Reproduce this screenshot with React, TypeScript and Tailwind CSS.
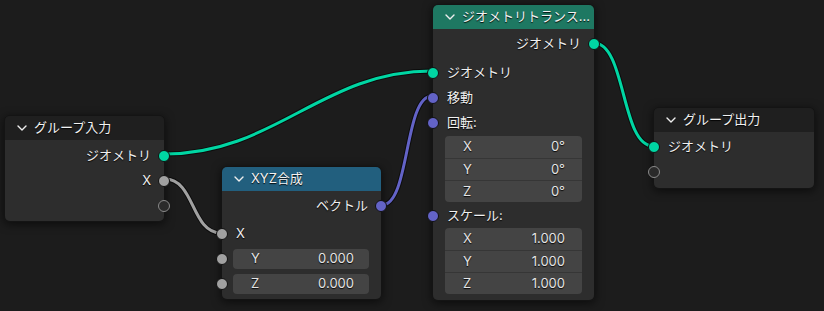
import type { ReactNode } from 'react';

const TEAL = '#00d6a3';
const PURPLE = '#6363c7';
const GREY = '#a1a1a1';

type SocketKind = 'teal' | 'purple' | 'grey' | 'empty';

const Socket = ({ kind, side }: { kind: SocketKind; side: 'left' | 'right' }) => {
  const pos = side === 'left' ? 'left-0 -translate-x-1/2' : 'right-0 translate-x-1/2';
  if (kind === 'empty') {
    return (
      <span
        className={`absolute top-1/2 -translate-y-1/2 ${pos} w-[12px] h-[12px] rounded-full bg-[#2a2a2a] border-[1.5px] border-[#8a8a8a] z-10`}
      />
    );
  }
  const bg = kind === 'teal' ? 'bg-[#00d6a3]' : kind === 'purple' ? 'bg-[#6363c7]' : 'bg-[#a1a1a1]';
  return (
    <span
      className={`absolute top-1/2 -translate-y-1/2 ${pos} w-[12px] h-[12px] rounded-full ${bg} border border-[#111] z-10`}
    />
  );
};

const Chevron = () => (
  <svg width="12" height="12" viewBox="0 0 12 12" className="shrink-0">
    <polyline points="2,4 6,8 10,4" fill="none" stroke="#eeeeee" strokeWidth="1.4" strokeLinecap="round" strokeLinejoin="round" />
  </svg>
);

const Node = ({
  left,
  top,
  width,
  title,
  header,
  children,
  bodyClass,
}: {
  left: string;
  top: string;
  width: string;
  title: string;
  header: string;
  children: ReactNode;
  bodyClass: string;
}) => (
  <div className={`absolute ${left} ${top} ${width} rounded-[5px] shadow-[0_2px_10px_rgba(0,0,0,0.6)] border border-[#141414]`}>
    <div className={`h-[24px] ${header} rounded-t-[5px] flex items-center pl-[11px] gap-[6px] text-[13px] text-[#f2f2f2] whitespace-nowrap overflow-hidden`}>
      <Chevron />
      <span>{title}</span>
    </div>
    <div className={`bg-[#2d2d2d] rounded-b-[5px] flex flex-col ${bodyClass}`}>{children}</div>
  </div>
);

const OutRow = ({ label, kind }: { label?: string; kind: SocketKind }) => (
  <div className="relative h-[25px] flex items-center justify-end pr-[13px] text-[13px] text-[#f0f0f0]">
    {label}
    <Socket kind={kind} side="right" />
  </div>
);

const InRow = ({ label, kind, className = '' }: { label?: string; kind: SocketKind; className?: string }) => (
  <div className={`relative h-[25px] flex items-center pl-[14px] text-[13px] text-[#f0f0f0] ${className}`}>
    {label}
    <Socket kind={kind} side="left" />
  </div>
);

const FieldGroup = ({ rows, className = '' }: { rows: [string, string][]; className?: string }) => (
  <div className={`mx-[12px] rounded-[4px] overflow-hidden bg-[#444444] flex flex-col ${className}`}>
    {rows.map(([k, v], i) => (
      <div
        key={k}
        className={`h-[22px] flex items-center justify-between pl-[18px] pr-[17px] text-[13px] text-[#e4e4e4] ${
          i > 0 ? 'border-t border-[#363636]' : ''
        }`}
      >
        <span>{k}</span>
        <span>{v}</span>
      </div>
    ))}
  </div>
);

const Field = ({ label, value, className = '' }: { label: string; value: string; className?: string }) => (
  <div className={`relative h-[20px] ${className}`}>
    <Socket kind="grey" side="left" />
    <div className="ml-[11px] mr-[12px] h-full rounded-[4px] bg-[#444444] flex items-center justify-between pl-[18px] pr-[15px] text-[13px] text-[#e4e4e4]">
      <span>{label}</span>
      <span>{value}</span>
    </div>
  </div>
);

const Wire = ({ x1, y1, x2, y2, d, color }: { x1: number; y1: number; x2: number; y2: number; d: number; color: string }) => {
  const path = `M${x1},${y1} C${x1 + d},${y1} ${x2 - d},${y2} ${x2},${y2}`;
  return (
    <g>
      <path d={path} fill="none" stroke="#0c0c0c" strokeWidth="5" />
      <path d={path} fill="none" stroke={color} strokeWidth="3" />
    </g>
  );
};

export default function App() {
  return (
    <div
      className="relative w-[824px] h-[311px] overflow-hidden bg-[#1c1c1c] [text-shadow:0_1px_1px_rgba(0,0,0,0.9)]"
      style={{ fontFamily: '"Inter", "Noto Sans CJK JP", sans-serif' }}
    >
      <svg className="absolute inset-0" width="824" height="311">
        <Wire x1={165} y1={154} x2={432} y2={71} d={110} color={TEAL} />
        <Wire x1={165} y1={179} x2={221} y2={233} d={30} color={GREY} />
        <Wire x1={382} y1={205} x2={432} y2={96} d={28} color={PURPLE} />
        <Wire x1={594} y1={43} x2={653} y2={146} d={32} color={TEAL} />
      </svg>

      {/* グループ入力 */}
      <Node left="left-[4px]" top="top-[115px]" width="w-[161px]" title="グループ入力" header="bg-[#1f1f1f]" bodyClass="pt-[3px] pb-[3px]">
        <OutRow label="ジオメトリ" kind="teal" />
        <OutRow label="X" kind="grey" />
        <OutRow kind="empty" />
      </Node>

      {/* XYZ合成 */}
      <Node left="left-[221px]" top="top-[166px]" width="w-[161px]" title="XYZ合成" header="bg-[#225f7e]" bodyClass="pt-[2px] pb-[5px]">
        <OutRow label="ベクトル" kind="purple" />
        <InRow label="X" kind="grey" className="mt-[3px]" />
        <Field label="Y" value="0.000" className="mt-[3px]" />
        <Field label="Z" value="0.000" className="mt-[5px]" />
      </Node>

      {/* ジオメトリトランスフォーム */}
      <Node left="left-[432px]" top="top-[4px]" width="w-[163px]" title="ジオメトリトランス..." header="bg-[#1e7862]" bodyClass="pt-[2px] pb-[6px]">
        <OutRow label="ジオメトリ" kind="teal" />
        <InRow label="ジオメトリ" kind="teal" className="mt-[4px]" />
        <InRow label="移動" kind="purple" />
        <InRow label="回転:" kind="purple" />
        <FieldGroup className="mt-[1px]" rows={[['X', '0°'], ['Y', '0°'], ['Z', '0°']]} />
        <InRow label="スケール:" kind="purple" className="mt-[1px]" />
        <FieldGroup rows={[['X', '1.000'], ['Y', '1.000'], ['Z', '1.000']]} />
      </Node>

      {/* グループ出力 */}
      <Node left="left-[653px]" top="top-[107px]" width="w-[162px]" title="グループ出力" header="bg-[#1f1f1f]" bodyClass="pt-[2px] pb-[4px]">
        <InRow label="ジオメトリ" kind="teal" />
        <InRow kind="empty" />
      </Node>
    </div>
  );
}
